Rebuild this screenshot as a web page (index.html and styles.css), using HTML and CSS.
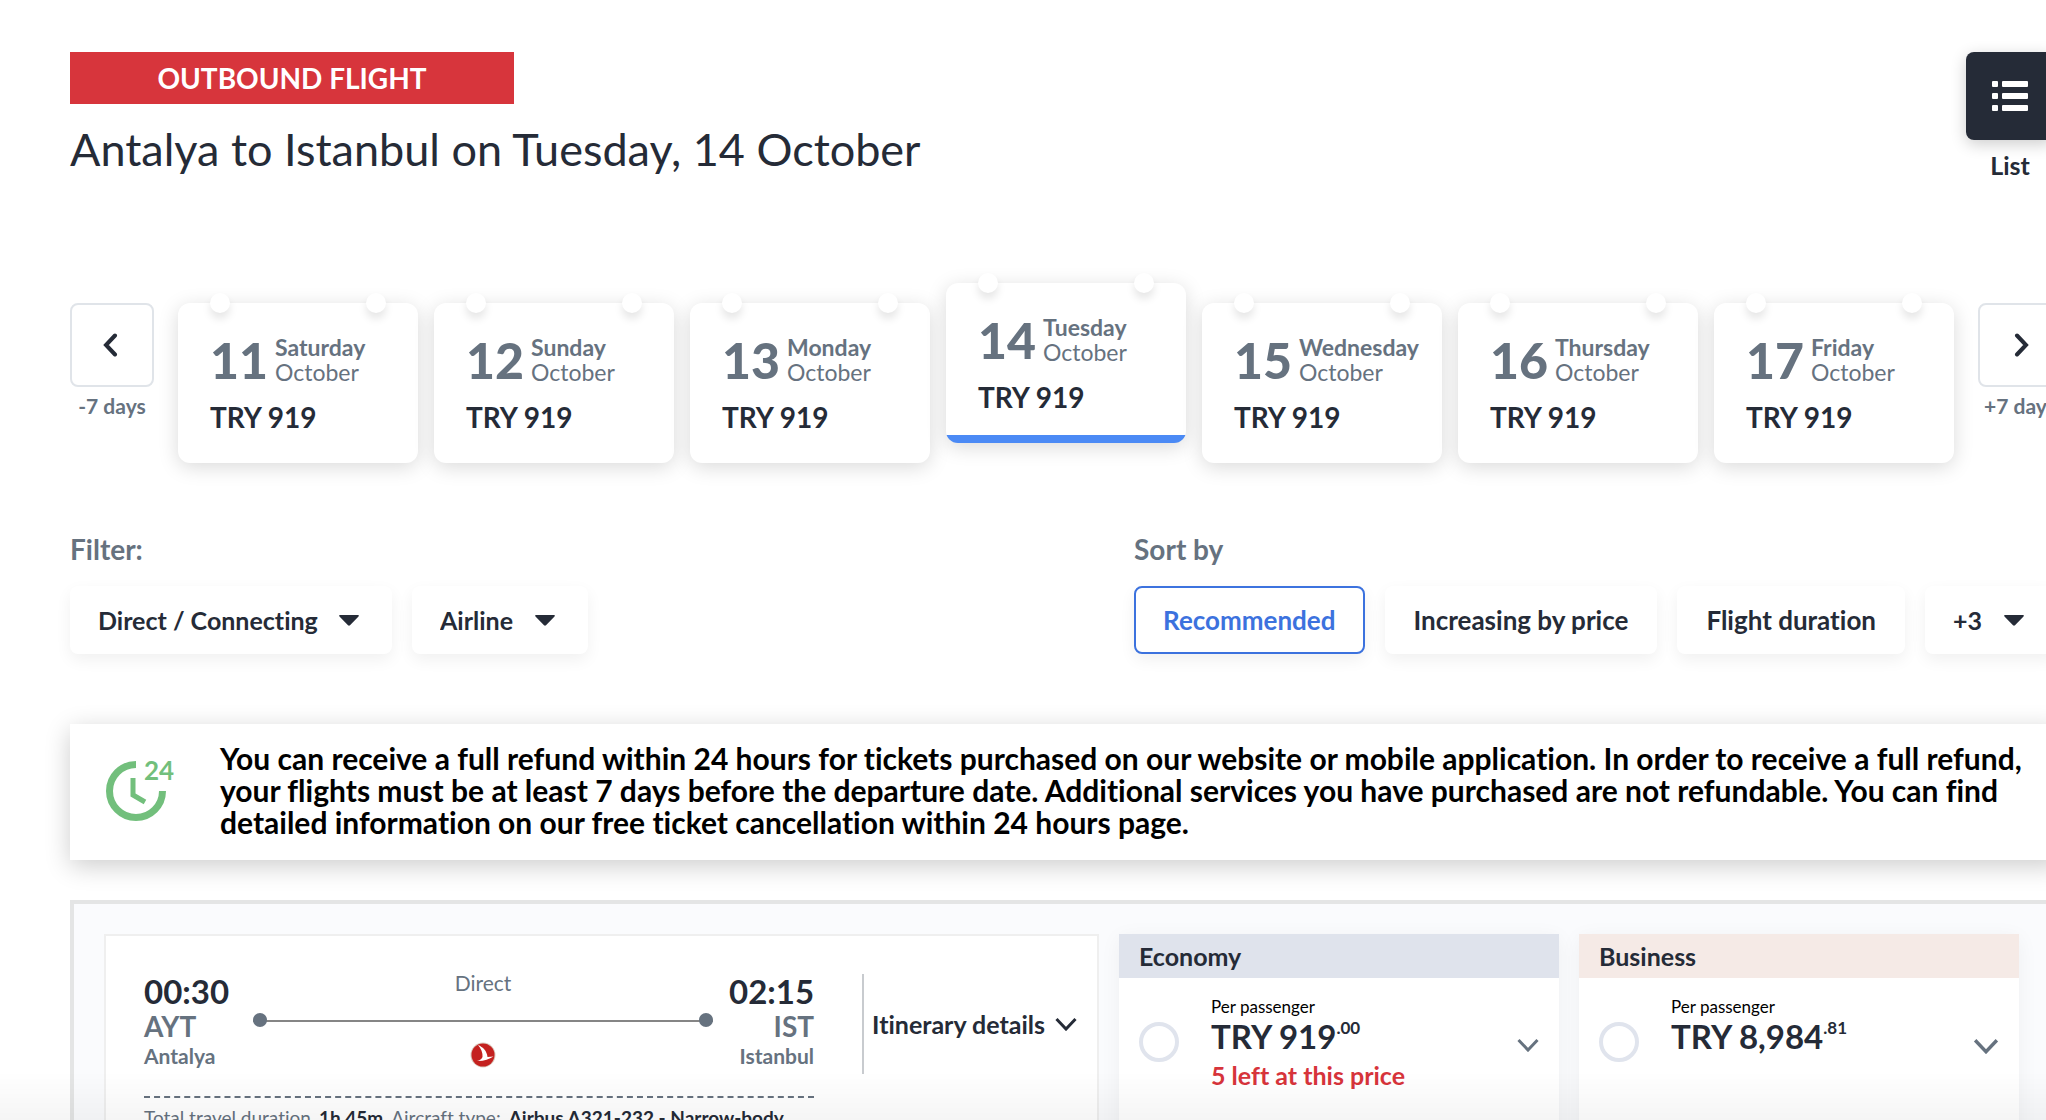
FILE: index.html
```html
<!DOCTYPE html>
<html lang="en">
  <head>
    <meta charset="utf-8">
    <title>Select your flight</title>
    <link rel="stylesheet" href="styles.css">
  </head>

  <body>
  <div class="page">

    <header class="top">
      <div>
        <div class="direction">OUTBOUND FLIGHT</div>
        <h1 class="route">Antalya to Istanbul on Tuesday, 14 October</h1>
      </div>
      <div class="view">
        <button class="viewButton" id="listView" aria-label="List">
          <svg width="36" height="30" viewBox="0 0 36 30" fill="#fff">
            <rect x="0" y="0" width="6" height="6" rx="1"/><rect x="10" y="0" width="26" height="6" rx="1"/>
            <rect x="0" y="12" width="6" height="6" rx="1"/><rect x="10" y="12" width="26" height="6" rx="1"/>
            <rect x="0" y="24" width="6" height="6" rx="1"/><rect x="10" y="24" width="26" height="6" rx="1"/>
          </svg>
        </button>
        <label for="listView">List</label>
      </div>
    </header>

    <!-- Date strip -->
    <nav class="dates">
      <div class="shift">
        <button id="prevWeek" aria-label="-7 days">
          <svg width="18" height="24" viewBox="0 0 18 24"><path d="M12 2.500L3 12L12 21.500"/></svg>
        </button>
        <label for="prevWeek">-7 days</label>
      </div>
      <div class="days">
        <button class="day">
          <span class="date"><b>11</b><span><strong>Saturday</strong><br>October</span></span>
          <span class="price">TRY 919</span>
        </button>
        <button class="day">
          <span class="date"><b>12</b><span><strong>Sunday</strong><br>October</span></span>
          <span class="price">TRY 919</span>
        </button>
        <button class="day">
          <span class="date"><b>13</b><span><strong>Monday</strong><br>October</span></span>
          <span class="price">TRY 919</span>
        </button>
        <button class="day selected">
          <span class="date"><b>14</b><span><strong>Tuesday</strong><br>October</span></span>
          <span class="price">TRY 919</span>
        </button>
        <button class="day">
          <span class="date"><b>15</b><span><strong>Wednesday</strong><br>October</span></span>
          <span class="price">TRY 919</span>
        </button>
        <button class="day">
          <span class="date"><b>16</b><span><strong>Thursday</strong><br>October</span></span>
          <span class="price">TRY 919</span>
        </button>
        <button class="day">
          <span class="date"><b>17</b><span><strong>Friday</strong><br>October</span></span>
          <span class="price">TRY 919</span>
        </button>
      </div>
      <div class="shift">
        <button id="nextWeek" aria-label="+7 days">
          <svg width="18" height="24" viewBox="0 0 18 24"><path d="M6 2.500L15 12L6 21.500"/></svg>
        </button>
        <label for="nextWeek">+7 days</label>
      </div>
    </nav>

    <!-- Filter and sort -->
    <div class="tools">
      <section>
        <h2>Filter:</h2>
        <div class="options">
          <div class="drop">
            <select aria-label="Stops"><option>Direct / Connecting</option></select>
            <svg width="20" height="11" viewBox="0 0 20 11"><path d="M1 0H19Q20.500 .5 19.500 1.500L11 10.300Q10 11.200 9 10.300L.5 1.500Q-.5 .5 1 0Z"/></svg>
          </div>
          <div class="drop">
            <select aria-label="Airline"><option>Airline</option></select>
            <svg width="20" height="11" viewBox="0 0 20 11"><path d="M1 0H19Q20.500 .5 19.500 1.500L11 10.300Q10 11.200 9 10.300L.5 1.500Q-.5 .5 1 0Z"/></svg>
          </div>
        </div>
      </section>
      <section>
        <h2>Sort by</h2>
        <div class="options">
          <button class="option active">Recommended</button>
          <button class="option">Increasing by price</button>
          <button class="option">Flight duration</button>
          <div class="drop">
            <select aria-label="More sort options"><option>+3</option></select>
            <svg width="20" height="11" viewBox="0 0 20 11"><path d="M1 0H19Q20.500 .5 19.500 1.500L11 10.300Q10 11.200 9 10.300L.5 1.500Q-.5 .5 1 0Z"/></svg>
          </div>
        </div>
      </section>
    </div>

    <div class="notice">
      <svg class="refund" width="70" height="60" viewBox="0 0 70 60" fill="none" stroke="#72bf7c">
        <path d="M30 3.500A26.500 26.500 0 1 0 56.500 30" stroke-width="7"/>
        <path d="M27 17V34L39 41" stroke-width="5"/>
        <text x="38" y="19" font-size="26" font-weight="700" fill="#72bf7c" stroke="none">24</text>
      </svg>
      <p>You can receive a full refund within 24 hours for tickets purchased on our website or mobile application. In order to receive a full refund, your flights must be at least 7 days before the departure date. Additional services you have purchased are not refundable. You can find detailed information on our free ticket cancellation within 24 hours page.</p>
    </div>

    <!-- Flight results -->
    <main class="results">
      <article class="flight">
        <div class="summary">
          <div class="journey">
            <div class="stop">
              <span class="time">00:30</span>
              <span class="code">AYT</span>
              <span class="city">Antalya</span>
            </div>
            <div class="leg">
              <span>Direct</span>
              <div class="line"></div>
              <svg width="26" height="26" viewBox="0 0 26 26">
                <circle cx="13" cy="13" r="12.500" fill="#d9c9bd"/>
                <circle cx="13" cy="13" r="11.500" fill="#c4211f"/>
                <path d="M8 3C13 5 17 9 17.500 15L23.500 14.500C19 17 13 19.500 7 19C10 18.500 11.500 17 12.500 15C13 11 11 6.500 8 3Z" fill="#fff"/>
              </svg>
            </div>
            <div class="stop arrival">
              <span class="time">02:15</span>
              <span class="code">IST</span>
              <span class="city">Istanbul</span>
            </div>
          </div>
          <div class="info">Total travel duration <b>1h 45m</b> Aircraft type: <b>Airbus A321-232 - Narrow-body</b></div>
        </div>
        <button class="details">Itinerary details
          <svg width="22" height="14" viewBox="0 0 22 14"><path d="M1.500 2L11 12L20.500 2"/></svg>
        </button>
      </article>

      <section class="fare economy">
        <h3>Economy</h3>
        <div class="offer">
          <input type="radio" name="fare" id="economy">
          <label for="economy">
            <small>Per passenger</small>
            <span class="amount">TRY 919<sup>.00</sup></span>
            <span class="left">5 left at this price</span>
          </label>
          <svg width="22" height="14" viewBox="0 0 22 14"><path d="M1.500 2L11 12L20.500 2"/></svg>
        </div>
      </section>

      <section class="fare business">
        <h3>Business</h3>
        <div class="offer">
          <input type="radio" name="fare" id="business">
          <label for="business">
            <small>Per passenger</small>
            <span class="amount">TRY 8,984<sup>.81</sup></span>
          </label>
          <svg width="26" height="16" viewBox="0 0 22 14"><path d="M1.500 2L11 12L20.500 2"/></svg>
        </div>
      </section>
    </main>

  </div>
  <div class="fade"></div>
  </body>

</html>
```
FILE: styles.css
```css
* {
  box-sizing: border-box;
}

body {
  margin: 0;
  height: 100vh;
  overflow: hidden;
  font-family: Lato, "Open Sans", sans-serif;
  font-size: 21px;
  font-variant-ligatures: none;
  color: #252b37;
  background-color: #fff;
}

button, select {
  font: inherit;
  font-variant-ligatures: none;
  color: inherit;
  border: 0;
  margin: 0;
  background-color: #fff;
}

h1, h2, h3, p {
  margin: 0;
}

svg {
  display: block;
  flex: none;
}

/* The strip is a little wider than the window and runs off the right edge */
.page {
  width: calc(100% + 16px);
  padding: 52px 0 0 70px;
}

/* Heading */
.top {
  display: flex;
  justify-content: space-between;
  padding-right: 8px;
}

.direction {
  width: 444px;
  background-color: #d7353c;
  color: #fff;
  font-size: 28px;
  font-weight: 700;
  line-height: 52px;
  text-align: center;
}

.route {
  margin-top: 16px;
  font-size: 45px;
  font-weight: 400;
  line-height: 58px;
}

.view {
  display: flex;
  flex-direction: column;
  align-items: center;
  gap: 9px;
  font-size: 25px;
  font-weight: 700;
  line-height: 32px;
}

.viewButton {
  display: flex;
  align-items: center;
  justify-content: center;
  width: 88px;
  height: 88px;
  border-radius: 8px;
  background-color: #252b37;
  box-shadow: 0 4px 16px rgba(0, 0, 0, .2);
}

/* Date strip */
.dates {
  display: flex;
  gap: 24px;
  margin-top: 122px;
}

.shift {
  flex: none;
  width: 84px;
  text-align: center;
  color: #66727f;
  font-weight: 700;
  line-height: 24px;
}

.shift button {
  display: flex;
  align-items: center;
  justify-content: center;
  width: 84px;
  height: 84px;
  margin-bottom: 7px;
  border: 2px solid #e0e4e9;
  border-radius: 8px;
}

.shift path {
  fill: none;
  stroke: #252b37;
  stroke-width: 4;
  stroke-linecap: round;
}

.days {
  flex: 1;
  display: flex;
  align-items: flex-start;
  gap: 16px;
}

.day {
  flex: 1;
  position: relative;
  display: flex;
  flex-direction: column;
  gap: 15px;
  height: 160px;
  padding: 32px 0 0 32px;
  border-radius: 12px;
  box-shadow: 0 4px 20px rgba(0, 0, 0, .15);
  text-align: left;
}

.day.selected {
  margin-top: -20px;
  background: linear-gradient(#4b8af5, #4b8af5) bottom / 100% 8px no-repeat #fff;
}

/* binder pins */
.day:before, .day:after {
  content: "";
  position: absolute;
  top: -10px;
  left: 32px;
  width: 20px;
  height: 20px;
  border-radius: 50%;
  background-color: #fff;
  box-shadow: 0 6px 8px rgba(0, 0, 0, .1);
}

.day:after {
  left: auto;
  right: 32px;
}

.date {
  display: flex;
  align-items: center;
  gap: 7px;
  color: #66727f;
  font-size: 23px;
  line-height: 25px;
}

.date b {
  font-size: 50px;
  font-weight: 900;
  line-height: 50px;
  font-variant-numeric: tabular-nums;
}

.price {
  font-size: 28px;
  font-weight: 700;
  line-height: 34px;
}

/* Filter and sort */
.tools {
  display: flex;
  justify-content: space-between;
  margin-top: 69px;
  padding-right: 5px;
}

.tools h2 {
  margin-bottom: 20px;
  color: #66727f;
  font-size: 28px;
  font-weight: 700;
  line-height: 34px;
}

.options {
  display: flex;
  gap: 20px;
  font-size: 25px;
  font-weight: 700;
}

.option, .drop select {
  height: 68px;
  padding: 0 29px;
  border-radius: 8px;
  box-shadow: 0 6px 16px rgba(0, 0, 0, .06);
}

.option {
  font-size: 26px;
}

.option.active {
  padding: 0 27px;
  border: 2px solid #3c72de;
  color: #3c72de;
}

.drop {
  position: relative;
}

.drop select {
  appearance: none;
  padding: 0 74px 0 28px;
}

.drop svg {
  position: absolute;
  right: 33px;
  top: 29px;
  fill: #252b37;
  pointer-events: none;
}

/* Refund notice */
.notice {
  display: flex;
  align-items: flex-start;
  gap: 44px;
  margin-top: 70px;
  padding: 18px 32px 22px 36px;
  box-shadow: 0 6px 24px rgba(0, 0, 0, .2);
  color: #000;
  font-size: 30px;
  font-weight: 700;
  line-height: 32px;
}

.refund {
  margin-top: 19px;
}

/* Flight results */
.results {
  display: flex;
  gap: 20px;
  height: 400px;
  margin-top: 40px;
  padding: 30px 39px 0 30px;
  border: 4px solid #e4e5e5;
  background-color: #fafbfd;
}

.flight {
  flex: 1;
  display: flex;
  border: 2px solid #efefef;
  background-color: #fff;
}

.summary {
  flex: 1;
  padding: 36px 0 0 38px;
  color: #66727f;
}

.journey {
  display: flex;
  justify-content: space-between;
  height: 126px;
  border-bottom: 2px dashed #66727f;
}

.stop {
  display: flex;
  flex-direction: column;
  font-weight: 700;
}

.arrival {
  text-align: right;
}

.time {
  color: #252b37;
  font-size: 33px;
  line-height: 38px;
}

.code {
  font-size: 28px;
  line-height: 32px;
}

.city {
  line-height: 27px;
}

.leg {
  flex: 1;
  display: flex;
  flex-direction: column;
  align-items: center;
  padding: 0 16px 0 24px;
  line-height: 22px;
}

.line {
  position: relative;
  width: 100%;
  height: 2px;
  margin: 26px 0 20px;
  background-color: #858585;
}

.line:before, .line:after {
  content: "";
  position: absolute;
  top: -7px;
  left: 0;
  width: 14px;
  height: 14px;
  border-radius: 50%;
  background-color: #66727f;
}

.line:after {
  left: auto;
  right: 0;
}

.info {
  display: flex;
  gap: 8px;
  margin-top: 8px;
  font-size: 19px;
  line-height: 24px;
  white-space: nowrap;
}

.info b {
  color: #252b37;
}

.details {
  display: flex;
  align-items: center;
  gap: 10px;
  height: 100px;
  margin: 38px 20px 0 48px;
  padding: 0 0 0 8px;
  border-left: 2px solid #c8cbcf;
  font-size: 25px;
  font-weight: 700;
}

.details path, .offer path {
  fill: none;
  stroke: #252b37;
  stroke-width: 3;
}

.offer path {
  stroke: #66727f;
}

.fare {
  width: 440px;
  background-color: #fff;
  box-shadow: 0 4px 20px rgba(0, 0, 0, .05);
}

.fare h3 {
  padding-left: 20px;
  font-size: 25px;
  font-weight: 700;
  line-height: 44px;
}

.economy h3 {
  background-color: #dfe3ec;
}

.business h3 {
  background-color: #f5eae6;
}

.offer {
  display: flex;
  padding: 18px 20px 0;
}

.offer input {
  appearance: none;
  flex: none;
  width: 40px;
  height: 40px;
  margin: 26px 32px 0 0;
  border: 4px solid #e0e4ed;
  border-radius: 50%;
}

.offer label {
  flex: 1;
  display: flex;
  flex-direction: column;
}

.offer small {
  color: #000;
  font-size: 17px;
  line-height: 22px;
}

.offer svg {
  margin-top: 42px;
}

.amount {
  font-size: 33px;
  font-weight: 700;
  line-height: 36px;
}

.amount sup {
  font-size: 17px;
  line-height: 0;
  vertical-align: 15px;
}

.left {
  color: #d7343b;
  font-size: 25px;
  font-weight: 700;
  line-height: 42px;
}

/* Shade along the bottom of the window */
.fade {
  position: fixed;
  left: 0;
  right: 0;
  bottom: 0;
  height: 48px;
  background-image: linear-gradient(rgba(0, 0, 0, 0), rgba(0, 0, 0, .04));
  pointer-events: none;
}
```
